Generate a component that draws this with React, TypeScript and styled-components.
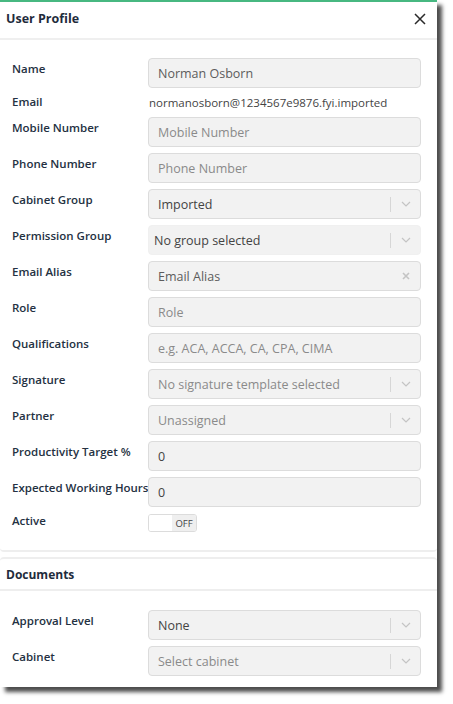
import React from "react";
import styled, { createGlobalStyle } from "styled-components";

const GlobalStyle = createGlobalStyle`
  body {
    margin: 0;
    background: #ffffff;
    font-family: "Open Sans", "Liberation Sans", sans-serif;
  }
`;

const Dialog = styled.div`
  width: 437px;
  background: #fff;
  border-top: 2px solid #47b881;
  box-shadow: 5px 5px 4px rgba(0, 0, 0, 0.7);
  margin-bottom: 12px;
`;

const Header = styled.div`
  height: 38px;
  display: flex;
  align-items: center;
  justify-content: space-between;
  padding: 0 9px 3px 6px;
  box-sizing: border-box;
  border-bottom: 2px solid #efefef;
`;

const Title = styled.div`
  font-size: 12.5px;
  font-weight: 700;
  color: #1f2c3c;
`;

const CloseBtn = styled.button`
  border: 0;
  background: none;
  padding: 0;
  width: 16px;
  height: 16px;
  display: flex;
  align-items: center;
  justify-content: center;
  cursor: pointer;
`;

const Card = styled.div<{ $top?: boolean }>`
  border-${(p) => (p.$top ? "bottom" : "top")}: 2px solid #eeeeee;
  border-radius: ${(p) => (p.$top ? "0 0 4px 4px" : "4px 4px 0 0")};
  padding: ${(p) => (p.$top ? "18px 16px 18px 12px" : "0 16px 11px 12px")};
  display: flex;
  flex-direction: column;
  gap: 6px;
`;

const Gap = styled.div`
  height: 5px;
`;

const SectionHead = styled.div`
  height: 30px;
  display: flex;
  align-items: center;
  padding-left: 6px;
  margin: 0 -16px 13px -12px;
  border-bottom: 2px solid #eeeeee;
  font-size: 12px;
  font-weight: 700;
  color: #1f2c3c;
`;

const Row = styled.div`
  display: grid;
  grid-template-columns: 136px 273px;
  align-items: start;
`;

const Label = styled.div<{ $compact?: boolean }>`
  font-size: 11.5px;
  font-weight: 600;
  line-height: 16px;
  padding-top: ${(p) => (p.$compact ? "0" : "3px")};
  color: #243142;
  white-space: nowrap;
`;

const PlainValue = styled.div`
  font-size: 11.5px;
  line-height: 17px;
  color: #444;
  padding-left: 1px;
`;

const Field = styled.div<{ $soft?: boolean }>`
  height: 30px;
  box-sizing: border-box;
  display: flex;
  align-items: center;
  background: #f2f2f2;
  border: 1px solid ${(p) => (p.$soft ? "#f0f0f0" : "#dcdcdc")};
  border-radius: 4px;
  padding: 0 0 0 ${(p) => (p.$soft ? "5px" : "9px")};
`;

const FieldText = styled.span<{ $tone: "dark" | "mid" | "light" }>`
  flex: 1;
  font-size: 12.5px;
  color: ${(p) =>
    p.$tone === "dark" ? "#444" : p.$tone === "mid" ? "#5c5c5c" : "#8a8a8a"};
  white-space: nowrap;
`;

const Indicators = styled.div`
  display: flex;
  align-items: center;
  height: 100%;
`;

const Sep = styled.span`
  width: 1px;
  height: 15px;
  background: #d6d6d6;
`;

const ArrowBox = styled.span`
  width: 29px;
  display: flex;
  align-items: center;
  justify-content: center;
`;

const ClearBox = styled.span`
  width: 28px;
  display: flex;
  align-items: center;
  justify-content: center;
`;

const Toggle = styled.div`
  width: 49px;
  height: 18px;
  box-sizing: border-box;
  border: 1px solid #dcdcdc;
  border-radius: 3px;
  display: flex;
  overflow: hidden;
  margin-top: 1px;
`;

const ToggleKnob = styled.span`
  flex: 1;
  background: #fff;
`;

const ToggleLabel = styled.span`
  width: 24px;
  background: #efefef;
  font-size: 9.5px;
  color: #444;
  display: flex;
  align-items: center;
  justify-content: center;
`;

const Chevron = () => (
  <svg width="10" height="6" viewBox="0 0 10 6">
    <path d="M1 1l4 4 4-4" fill="none" stroke="#c4c4c4" strokeWidth="1.2" />
  </svg>
);

type FieldDef = {
  label: string;
  value: string;
  tone: "dark" | "mid" | "light";
  kind?: "select" | "clear";
  soft?: boolean;
};

const InputRow = ({ label, value, tone, kind, soft }: FieldDef) => (
  <Row>
    <Label>{label}</Label>
    <Field $soft={soft}>
      <FieldText $tone={tone}>{value}</FieldText>
      {kind === "select" && (
        <Indicators>
          <Sep />
          <ArrowBox>
            <Chevron />
          </ArrowBox>
        </Indicators>
      )}
      {kind === "clear" && (
        <ClearBox>
          <svg width="8" height="8" viewBox="0 0 8 8">
            <path d="M1 1l6 6M7 1L1 7" stroke="#c4c4c4" strokeWidth="1.6" />
          </svg>
        </ClearBox>
      )}
    </Field>
  </Row>
);

const before: FieldDef[] = [
  { label: "Mobile Number", value: "Mobile Number", tone: "light" },
  { label: "Phone Number", value: "Phone Number", tone: "light" },
  { label: "Cabinet Group", value: "Imported", tone: "dark", kind: "select" },
  { label: "Permission Group", value: "No group selected", tone: "dark", kind: "select", soft: true },
  { label: "Email Alias", value: "Email Alias", tone: "mid", kind: "clear" },
  { label: "Role", value: "Role", tone: "light" },
  { label: "Qualifications", value: "e.g. ACA, ACCA, CA, CPA, CIMA", tone: "light" },
  { label: "Signature", value: "No signature template selected", tone: "light", kind: "select" },
  { label: "Partner", value: "Unassigned", tone: "light", kind: "select" },
  { label: "Productivity Target %", value: "0", tone: "dark" },
  { label: "Expected Working Hours", value: "0", tone: "dark" },
];

const documents: FieldDef[] = [
  { label: "Approval Level", value: "None", tone: "dark", kind: "select" },
  { label: "Cabinet", value: "Select cabinet", tone: "light", kind: "select" },
];

export default function App() {
  return (
    <>
      <GlobalStyle />
      <Dialog>
        <Header>
          <Title>User Profile</Title>
          <CloseBtn aria-label="Close">
            <svg width="12" height="12" viewBox="0 0 12 12">
              <path d="M1 1l10 10M11 1L1 11" stroke="#2a2a2a" strokeWidth="1.5" />
            </svg>
          </CloseBtn>
        </Header>
        <Card $top>
          <InputRow label="Name" value="Norman Osborn" tone="mid" />
          <Row>
            <Label $compact>Email</Label>
            <PlainValue>normanosborn@1234567e9876.fyi.imported</PlainValue>
          </Row>
          {before.map((f) => (
            <InputRow key={f.label} {...f} />
          ))}
          <Row>
            <Label $compact>Active</Label>
            <Toggle>
              <ToggleKnob />
              <ToggleLabel>OFF</ToggleLabel>
            </Toggle>
          </Row>
        </Card>
        <Gap />
        <Card>
          <SectionHead>Documents</SectionHead>
          {documents.map((f) => (
            <InputRow key={f.label} {...f} />
          ))}
        </Card>
      </Dialog>
    </>
  );
}
